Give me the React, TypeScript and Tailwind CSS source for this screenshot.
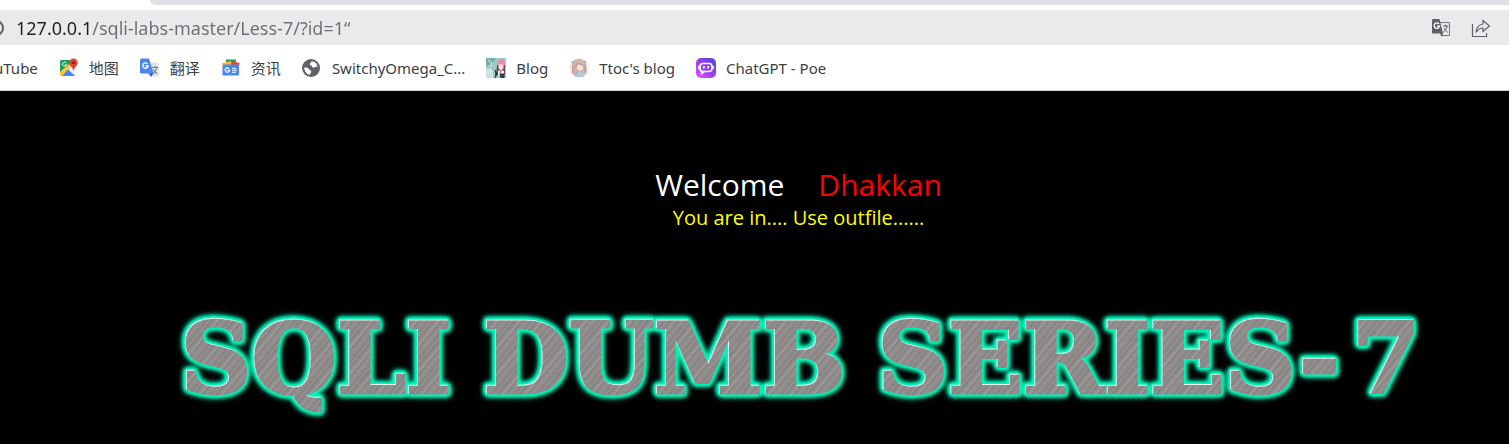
import type { ReactNode } from "react";

function MapsIcon() {
  return (
    <svg viewBox="0 0 20 20" className="size-5 shrink-0" aria-hidden="true">
      <rect x="1" y="2" width="16" height="16" rx="1.5" fill="#e6eaef" />
      <path d="M2.500 2H13v4L1 16V3.500A1.500 1.500 0 0 1 2.500 2Z" fill="#1fa05a" />
      <path d="m1 14 9-8 3 3-10 9H1Z" fill="#fbc73b" />
      <path d="m3 18 6-6.500 7 6.500Z" fill="#4285f4" />
      <path d="m10 10 2-2 5 6v4Z" fill="#f1f3f4" />
      <path d="M14.500 0.500a4.200 4.200 0 0 0-4.200 4.200c0 3.200 3.400 4 4.200 8 .8-4 4.200-4.800 4.200-8A4.200 4.200 0 0 0 14.500.5Z" fill="#e0443a" />
      <circle cx="14.500" cy="4.700" r="1.500" fill="#85251f" />
      <path d="M7.200 5a2 2 0 1 0 .3 1.600H6" fill="none" stroke="#fff" strokeWidth="1" />
    </svg>
  );
}

function TranslateIcon() {
  return (
    <svg viewBox="0 0 20 20" className="size-5 shrink-0" aria-hidden="true">
      <rect x="8" y="4.500" width="11" height="14" rx="1" fill="#dfe3e8" />
      <path d="M11.500 9.500H18M15 8v1.500M12 16c3-1.500 4-3.500 4.500-6.500M13 11.500c1 2 2.500 3 4 4" fill="none" stroke="#6b7f86" strokeWidth="1.100" />
      <path d="m9 15 4.500 0-2.500 4Z" fill="#3050b8" />
      <path d="M1.500.5H9L13.500 15.500h-12A1.500 1.500 0 0 1 0 14V2A1.500 1.500 0 0 1 1.500.5Z" fill="#4a86ee" />
      <path d="M7.600 5.800a2.700 2.700 0 1 0 .6 2.200H5.500" fill="none" stroke="#fff" strokeWidth="1.300" />
    </svg>
  );
}

function NewsIcon() {
  return (
    <svg viewBox="0 0 20 20" className="size-5 shrink-0" aria-hidden="true">
      <rect x="5" y="1.500" width="10" height="8" fill="#269c58" />
      <path d="m1 5 9-2 1 6H2Z" fill="#fbc02d" />
      <path d="m11 3 7.500 2L18 9h-8Z" fill="#e5483b" />
      <rect x="1.500" y="6.500" width="16.500" height="11" rx="1.200" fill="#4a86f0" />
      <path d="M8 10.600a2.200 2.200 0 1 0 .5 1.800H6.500" fill="none" stroke="#fff" strokeWidth="1.200" />
      <path d="M11 10.300h4M11 12.300h5M11 14.300h4" stroke="#fff" strokeWidth="1.100" />
    </svg>
  );
}

function GlobeIcon() {
  return (
    <svg viewBox="0 0 20 20" className="size-5 shrink-0" aria-hidden="true">
      <circle cx="9" cy="10" r="9" fill="#5f6368" />
      <path d="M2.300 9.500c2.500-.3 4.500.3 5 2 .2 1.200 1.900.6 2 2 .1 1.200-1.200 1.400-1.300 3.200-3.300-.4-5.900-3.700-5.700-7.200Z" fill="#fff" />
      <path d="M9.500 3.200c-.2 1.500-1.800 1.600-1.700 3 .1 1.300 2 .8 2.200 2.300.2 1.300 2.300 1.300 3.200.5.8-.8 1.800-.3 2.400.4C15.500 6 13 3.300 9.500 3.200Z" fill="#fff" />
    </svg>
  );
}

function BlogIcon() {
  return (
    <svg viewBox="0 0 20 20" className="size-5 shrink-0" aria-hidden="true">
      <rect width="20" height="20" fill="#9ccbc8" />
      <path d="M0 0h10L6 6 0 8Z" fill="#73b0a8" />
      <path d="M0 11c3-2 6 0 7 2v7H0Z" fill="#c7e2e0" />
      <path d="m2 2 4 3-2 4M1 15l5-3" stroke="#e4f3ee" fill="none" />
      <path d="M11 7h8v9l-2 2-7-1Z" fill="#6b4a4c" />
      <path d="M11 5c0-5 8-6 8 0v2h-8Z" fill="#ec8db2" />
      <path d="M12.500 6.500h5v4l-2.500 2-2.500-2Z" fill="#f6ddd4" />
      <path d="m12 13 3-1 3 1v5h-6Z" fill="#edf2f2" />
      <path d="m9 12 2 4-2 4M14 16h4v4h-3Z" stroke="#222d38" fill="#444950" />
      <path d="m15 12-1 3" stroke="#d8416d" />
    </svg>
  );
}

function AvatarIcon() {
  return (
    <svg viewBox="0 0 20 20" className="size-5 shrink-0" aria-hidden="true">
      <circle cx="10" cy="10" r="9.800" fill="#eeeae9" />
      <path d="M3 6c1-6 12-7 14 0l1 9-4 3H6l-3-3Z" fill="#d3b3aa" />
      <path d="M8 8c2-2 5-1 6 0v3l-3 2-3-2Z" fill="#f5e3dc" />
      <path d="m7 14 4-1 4 2v4H6Z" fill="#b3c7da" />
      <path d="M4 8v7M16 7v7M6 9l3-4 6 3M8 14l-2 3" stroke="#b8938c" fill="none" />
      <path d="m3 5 2-2M15 3l2 2" stroke="#a8b9cf" strokeWidth="2" />
    </svg>
  );
}

function PoeIcon() {
  return (
    <svg viewBox="0 0 20 20" className="size-5 shrink-0" aria-hidden="true">
      <defs>
        <linearGradient id="poe" x1="0" y1="1" x2="1" y2="0">
          <stop offset="0" stopColor="#ea52f5" />
          <stop offset=".5" stopColor="#9a3df0" />
          <stop offset="1" stopColor="#4a4cc8" />
        </linearGradient>
      </defs>
      <rect width="20" height="20" rx="5" fill="url(#poe)" />
      <rect x="4" y="5.500" width="12" height="8" rx="3" fill="none" stroke="#fff" strokeWidth="1.600" />
      <path d="M5.500 13v3l3-2.500M2.800 8v3M17.200 8v3" stroke="#fff" strokeWidth="1.400" fill="none" />
      <path d="M7.800 8v2.500M12.200 8v2.500" stroke="#fff" strokeWidth="1.800" />
    </svg>
  );
}

const bookmarks: { label: string; icon: ReactNode }[] = [
  { label: "地图", icon: <MapsIcon /> },
  { label: "翻译", icon: <TranslateIcon /> },
  { label: "资讯", icon: <NewsIcon /> },
  { label: "SwitchyOmega_C...", icon: <GlobeIcon /> },
  { label: "Blog", icon: <BlogIcon /> },
  { label: "Ttoc's blog", icon: <AvatarIcon /> },
  { label: "ChatGPT - Poe", icon: <PoeIcon /> },
];

const metal =
  "bg-clip-text text-transparent [-webkit-text-stroke:3px_transparent] bg-[repeating-linear-gradient(130deg,#898484_0px,#989494_2px,#868181_3px,#918d8d_6px,#a09c9c_8px,#898484_9px,#959191_13px,#898484_17px)]";

export default function App() {
  return (
    <div className="flex min-h-screen flex-col bg-black font-['Open_Sans','Noto_Sans_CJK_SC',sans-serif]">
      <header className="border-b border-[#d5d7da] bg-white font-['Noto_Sans','Noto_Sans_CJK_SC',sans-serif]">
        <div className="h-[5px] pl-[150px]">
          <div className="h-full rounded-bl-lg bg-[#dee1e6]" />
        </div>
        <div className="mt-[5px] flex h-[35px] items-center bg-[#e9eaec] pr-[18px]">
          <svg viewBox="0 0 4 18" className="mr-3 h-[18px] w-1 shrink-0" fill="none" stroke="#5f6368" strokeWidth="2" aria-hidden="true">
            <circle cx="-4" cy="9" r="7" />
          </svg>
          <input
            aria-label="Address"
            defaultValue="127.0.0.1/sqli-labs-master/Less-7/?id=1“"
            className="min-w-0 flex-1 bg-[linear-gradient(90deg,#202124_75px,#6b6e72_75px)] bg-clip-text text-lg text-transparent caret-black outline-none"
          />
          <button aria-label="Translate this page" className="mr-5">
            <svg viewBox="0 0 20 20" className="size-5" aria-hidden="true">
              <path d="M8 4.500h10.500v13H10" fill="none" stroke="#74777b" />
              <path d="M12 8h5.500M14.500 6.500V8M12 14.500c2-1.500 3.500-3.500 4-6.500M13 10c1 2 2 3 4 4.500" fill="none" stroke="#5f6368" />
              <path d="M2 1h6.500L12 15.500H2a1 1 0 0 1-1-1V2a1 1 0 0 1 1-1ZM9 15.500h3L10.500 19Z" fill="#5f6368" />
              <path d="M8 6a2.700 2.700 0 1 0 .5 2.200H6" fill="none" stroke="#fff" strokeWidth="1.300" />
            </svg>
          </button>
          <button aria-label="Share this page">
            <svg viewBox="0 0 20 20" className="size-5" fill="none" stroke="#5f6368" strokeWidth="1.200" aria-hidden="true">
              <path d="M1.500 6v12.500h14V15" />
              <path d="M5 14.500C5.500 9.500 8 6.500 12 6V2.500L18.500 8 12 13.500V10c-3 0-5 1.500-7 4.500Z" />
            </svg>
          </button>
        </div>
        <nav aria-label="Bookmarks" className="flex h-[45px] items-center gap-[21px] overflow-hidden pt-px text-[15px] whitespace-nowrap text-[#3c4043]">
          <a href="#youtube" className="-ml-1.5">uTube</a>
          {bookmarks.map(({ label, icon }) => (
            <a key={label} href="#bookmark" className="flex items-center gap-[10px]">
              {icon}
              {label}
            </a>
          ))}
        </nav>
      </header>
      <main className="flex flex-col items-center pt-[74px]">
        <p className="flex gap-[34px] pl-[88px] text-[30px] leading-10 text-white">
          <span>Welcome</span>
          <span className="text-[#ff0000]">Dhakkan</span>
        </p>
        <p className="pl-[88px] text-[20px] leading-[26px] text-[#ffff00]">You are in.... Use outfile......</p>
        <h1 className="mt-[68px] flex gap-8 pl-[92px] font-['DejaVu_Serif',serif] text-[98px] leading-[120px] font-bold whitespace-nowrap [filter:drop-shadow(-1px_-1px_0_#e8f5f2)_drop-shadow(0_0_1px_#00f5b8)_drop-shadow(0_0_1px_#00f5b8)_drop-shadow(0_0_1px_#00f5b8)_drop-shadow(0_0_2px_#00f5b8)_drop-shadow(0_0_2px_#00f5b8)]">
          <span className={metal}>SQLI</span>
          <span className={metal}>DUMB</span>
          <span className="flex gap-3">
            <span className={metal}>SERIES-</span>
            <span className={metal}>7</span>
          </span>
        </h1>
      </main>
    </div>
  );
}
